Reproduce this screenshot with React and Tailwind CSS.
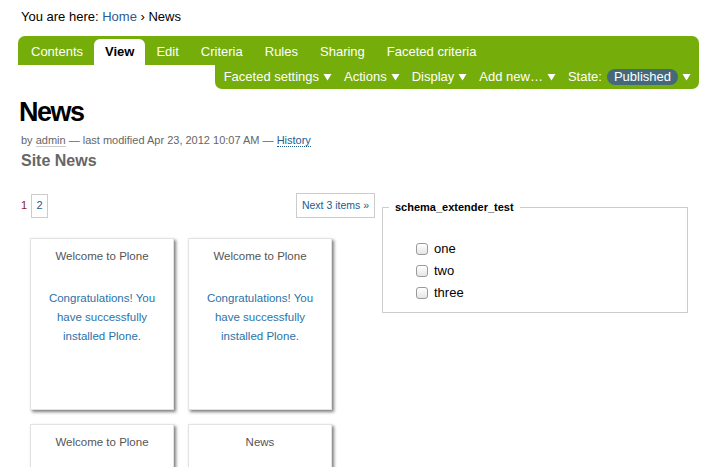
import React from 'react'

const TABS = ['Contents', 'View', 'Edit', 'Criteria', 'Rules', 'Sharing', 'Faceted criteria']

const CARDS = [
  { title: 'Welcome to Plone', text: 'Congratulations! You have successfully installed Plone.' },
  { title: 'Welcome to Plone', text: 'Congratulations! You have successfully installed Plone.' },
  { title: 'Welcome to Plone', text: '' },
  { title: 'News', text: '' },
]

function Caret() {
  return (
    <svg width="9" height="8" viewBox="0 0 9 8" className="ml-[4px] shrink-0">
      <path d="M0.5 1 L8.5 1 L4.5 7.5 Z" fill="#fff" />
    </svg>
  )
}

function MenuItem({ label }) {
  return (
    <span className="flex items-center text-white">
      {label}
      <Caret />
    </span>
  )
}

function Card({ title, text }) {
  return (
    <div className="h-[172px] bg-white border border-[#e3e3e3] shadow-[2px_2px_3px_rgba(0,0,0,0.5)] px-[12px] pt-[8px] text-center">
      <div className="text-[11.5px] leading-[18px] text-[#555]">{title}</div>
      {text && <div className="mt-[24px] text-[11.5px] leading-[19px] text-[#2b72a9]">{text}</div>}
    </div>
  )
}

function Check({ label }) {
  return (
    <div className="h-[22px] flex items-center">
      <span className="w-[12px] h-[12px] rounded-[3px] border border-[#9a9a9a] bg-gradient-to-b from-white to-[#e6e6e6] shadow-[inset_0_1px_0_rgba(255,255,255,0.8)]" />
      <span className="ml-[6px] text-[13px] text-black">{label}</span>
    </div>
  )
}

export default function App() {
  return (
    <div className="w-full h-[467px] overflow-hidden bg-white font-['Liberation_Sans',Arial,sans-serif]">
      <div className="pl-[18px] pr-[22px]">
        {/* breadcrumbs */}
        <div className="pt-[9px] pl-[3px] h-[36px] text-[13px] leading-[16px] text-black">
          You are here: <a className="text-[#2d5a8e]">Home</a> › News
        </div>

        {/* edit bar */}
        <div className="bg-[#75ad0a] rounded-t-[7px] h-[29px] flex items-end pl-[2px] text-[13px]">
          {TABS.map(t =>
            t === 'View' ? (
              <span key={t} className="h-[26px] px-[11px] flex items-center bg-white rounded-t-[6px] font-bold text-black">{t}</span>
            ) : (
              <span key={t} className="h-[26px] px-[11px] flex items-center text-white">{t}</span>
            )
          )}
        </div>
        <div className="flex justify-end">
          <div className="bg-[#75ad0a] rounded-b-[7px] h-[24px] pl-[9px] pr-[8px] flex items-center gap-[12px] text-[13px]">
            <MenuItem label="Faceted settings" />
            <MenuItem label="Actions" />
            <MenuItem label="Display" />
            <MenuItem label="Add new…" />
            <span className="flex items-center text-white">
              State:
              <span className="ml-[5px] h-[16px] px-[7px] rounded-full bg-[#44697a] flex items-center">Published</span>
              <Caret />
            </span>
          </div>
        </div>

        {/* title */}
        <h1 className="mt-[8px] pl-[1px] text-[27px] leading-[31px] font-bold text-black tracking-[-1.5px]">News</h1>
        <div className="mt-[4px] pl-[3px] text-[11px] leading-[16px] text-[#666]">
          by <a className="text-[#666] border-b border-[#ccc]">admin</a> — last modified Apr 23, 2012 10:07 AM —{' '}
          <a className="text-[#205c90] border-b border-dotted border-[#205c90]">History</a>
        </div>
        <div className="mt-[2px] pl-[3px] text-[16px] leading-[22px] font-bold text-[#666]">Site News</div>

        {/* body */}
        <div className="mt-[21px] flex">
          <div className="w-[357px]">
            <div className="flex justify-between items-center h-[25px]">
              <div className="flex items-center pl-[3px] text-[11px]">
                <span className="text-[#8b1c1c]">1</span>
                <span className="ml-[4px] w-[17px] h-[24px] border border-[#ccc] flex items-center justify-center text-[#205c90]">2</span>
              </div>
              <span className="h-[25px] px-[5px] border border-[#ccc] flex items-center text-[10.5px] text-[#205c90]">Next 3 items »</span>
            </div>
            <div className="mt-[20px] ml-[12px] grid grid-cols-[144px_144px] gap-[14px]">
              {CARDS.map((c, i) => (
                <Card key={i} title={c.title} text={c.text} />
              ))}
            </div>
          </div>

          <div className="ml-[7px] w-[306px] mt-[6px]">
            <fieldset className="border border-[#ccc] pl-[6px] pb-[11px] h-[114px]">
              <legend className="px-[6px] text-[11px] font-bold text-black">schema_extender_test</legend>
              <div className="pt-[22px] pl-[27px]">
                <Check label="one" />
                <Check label="two" />
                <Check label="three" />
              </div>
            </fieldset>
          </div>
        </div>
      </div>
    </div>
  )
}
